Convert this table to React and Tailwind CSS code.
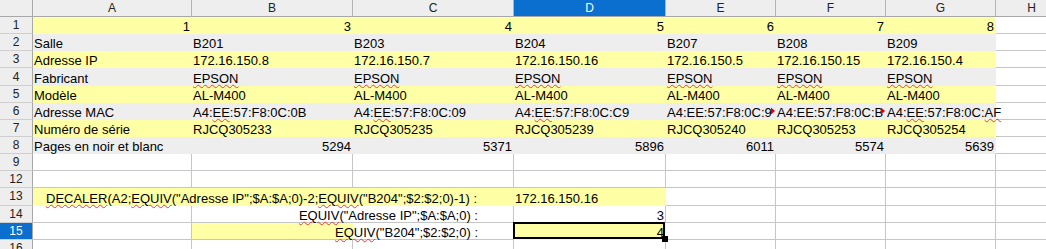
import React from 'react';
import clsx from 'clsx';

const letters = ['A', 'B', 'C', 'D', 'E', 'F', 'G', 'H'];
const widths = ['w-[159px]', 'w-[161px]', 'w-[161px]', 'w-[152px]', 'w-[110px]', 'w-[110px]', 'w-[110px]', 'w-[72px]'];

const YELLOW = 'bg-[#ffffa6] border-transparent';
const GRAY = 'bg-[#eeeeee] border-transparent';
const GRID = 'bg-white border-[#c6c6c6]';
const ROW_H = 'h-[17.15px]';

// spell-check squiggle, kept above the next row's fill
function Wavy({ children }) {
  return (
    <span className="relative z-10 underline decoration-wavy decoration-[#e83a3a] decoration-1 underline-offset-[1px]">
      {children}
    </span>
  );
}

function Mac({ tail }) {
  return (
    <>
      A4:<Wavy>EE</Wavy>:57:F8:0C:{tail}
    </>
  );
}

// text cut off by the next cell, with the little red arrow
function Clipped({ children }) {
  return (
    <>
      <span>{children}</span>
      <svg className="absolute top-1/2 right-0 -translate-y-1/2" width="4" height="7" viewBox="0 0 4 7">
        <path d="M0 0 L4 3.5 L0 7 Z" fill="#e00000" />
      </svg>
    </>
  );
}

function Cell({ className, fill = GRID, right, children }) {
  return (
    <div
      className={clsx(
        'flex shrink-0 items-end border-r border-b px-px leading-[13px] whitespace-nowrap',
        fill,
        right && 'justify-end',
        className
      )}
    >
      {children}
    </div>
  );
}

function RowHead({ n, active }) {
  return (
    <div
      className={clsx(
        'flex w-[33px] shrink-0 items-center justify-center border-r border-b border-r-[#a8a8a8] border-b-[#cfcfcf] text-[12px]',
        active ? 'bg-[#0a6fcf] text-white' : 'bg-[#eeeeee] text-[#222]'
      )}
    >
      {n}
    </div>
  );
}

function DataRow({ n, fill, cells = [] }) {
  return (
    <div className={clsx('flex', ROW_H)}>
      <RowHead n={n} />
      {widths.map((w, i) => {
        const c = cells[i];
        return (
          <Cell key={i} className={clsx(w, c?.className)} fill={fill && i < 7 ? fill : GRID} right={c?.right}>
            {c?.text}
          </Cell>
        );
      })}
    </div>
  );
}

const r = (text) => ({ text, right: true });
const l = (text) => ({ text });
const epson = { text: <Wavy>EPSON</Wavy> };

const rows = [
  { n: 1, fill: YELLOW, cells: [r('1'), r('3'), r('4'), r('5'), r('6'), r('7'), r('8')] },
  { n: 2, fill: GRAY, cells: ['Salle', 'B201', 'B203', 'B204', 'B207', 'B208', 'B209'].map(l) },
  {
    n: 3,
    fill: YELLOW,
    cells: ['Adresse IP', '172.16.150.8', '172.16.150.7', '172.16.150.16', '172.16.150.5', '172.16.150.15', '172.16.150.4'].map(l),
  },
  { n: 4, fill: GRAY, cells: [l('Fabricant'), epson, epson, epson, epson, epson, epson] },
  { n: 5, fill: YELLOW, cells: ['Modèle', 'AL-M400', 'AL-M400', 'AL-M400', 'AL-M400', 'AL-M400', 'AL-M400'].map(l) },
  {
    n: 6,
    fill: GRAY,
    cells: [
      l('Adresse MAC'),
      l(<Mac tail="0B" />),
      l(<Mac tail="09" />),
      l(<Mac tail="C9" />),
      { text: <Clipped><Mac tail="9" /></Clipped>, className: 'relative overflow-hidden' },
      { text: <Clipped><Mac tail="B" /></Clipped>, className: 'relative overflow-hidden' },
      l(
        <span className="relative z-10">
          <Mac tail={<Wavy>AF</Wavy>} />
        </span>
      ),
    ],
  },
  {
    n: 7,
    fill: YELLOW,
    cells: ['Numéro de série', 'RJCQ305233', 'RJCQ305235', 'RJCQ305239', 'RJCQ305240', 'RJCQ305253', 'RJCQ305254'].map(l),
  },
  { n: 8, fill: GRAY, cells: [l('Pages en noir et blanc'), r('5294'), r('5371'), r('5896'), r('6011'), r('5574'), r('5639')] },
  { n: 9 },
  { n: 12 },
];

function EmptyTail({ from }) {
  return widths.slice(from).map((w, i) => <Cell key={i} className={w} />);
}

export default function App() {
  return (
    <div className="h-[249px] w-[1046px] overflow-hidden bg-white font-['Liberation_Sans',Arial,sans-serif] text-[13px] text-black">
      <div className="flex h-[17px]">
        <div className="w-[33px] shrink-0 border-r border-b border-[#a8a8a8] bg-[#eeeeee]" />
        {letters.map((c, i) => (
          <div
            key={c}
            className={clsx(
              widths[i],
              'flex shrink-0 items-center justify-center border-r border-b border-r-[#b4b4b4] border-b-[#a8a8a8] text-[12px]',
              c === 'D' ? 'bg-[#0a6fcf] text-white' : 'bg-[#eeeeee] text-[#222]'
            )}
          >
            {c}
          </div>
        ))}
      </div>

      {rows.map((row) => (
        <DataRow key={row.n} {...row} />
      ))}

      <div className={clsx('flex', ROW_H)}>
        <RowHead n={13} />
        <Cell className="w-[481px] pl-[13px]" fill={YELLOW}>
          <span>
            <Wavy>DECALER</Wavy>(A2;<Wavy>EQUIV</Wavy>("Adresse IP";$A:$A;0)-2;<Wavy>EQUIV</Wavy>("B204";$2:$2;0)-1) :
          </span>
        </Cell>
        <Cell className={widths[3]} fill={YELLOW}>
          172.16.150.16
        </Cell>
        <EmptyTail from={4} />
      </div>

      <div className={clsx('flex', ROW_H)}>
        <RowHead n={14} />
        <Cell className={widths[0]} />
        <Cell className="w-[322px] pr-[35px]" right>
          <span>
            <Wavy>EQUIV</Wavy>("Adresse IP";$A:$A;0) :
          </span>
        </Cell>
        <Cell className={widths[3]} right>
          3
        </Cell>
        <EmptyTail from={4} />
      </div>

      <div className={clsx('flex', ROW_H)}>
        <RowHead n={15} active />
        <Cell className={widths[0]} />
        <Cell
          className="w-[322px] pr-[35px]"
          fill="bg-[linear-gradient(to_right,#ffffa6_161px,#ffffff_161px)] border-[#c6c6c6]"
          right
        >
          <span>
            <Wavy>EQUIV</Wavy>("B204";$2:$2;0) :
          </span>
        </Cell>
        <Cell className={clsx(widths[3], 'relative')} fill={YELLOW} right>
          4
          <div className="pointer-events-none absolute -top-px right-0 bottom-0 -left-px z-10 border-2 border-black" />
          <div className="absolute -right-[3px] -bottom-[3px] z-10 size-[6px] bg-black" />
        </Cell>
        <EmptyTail from={4} />
      </div>

      <DataRow n={16} />
    </div>
  );
}
